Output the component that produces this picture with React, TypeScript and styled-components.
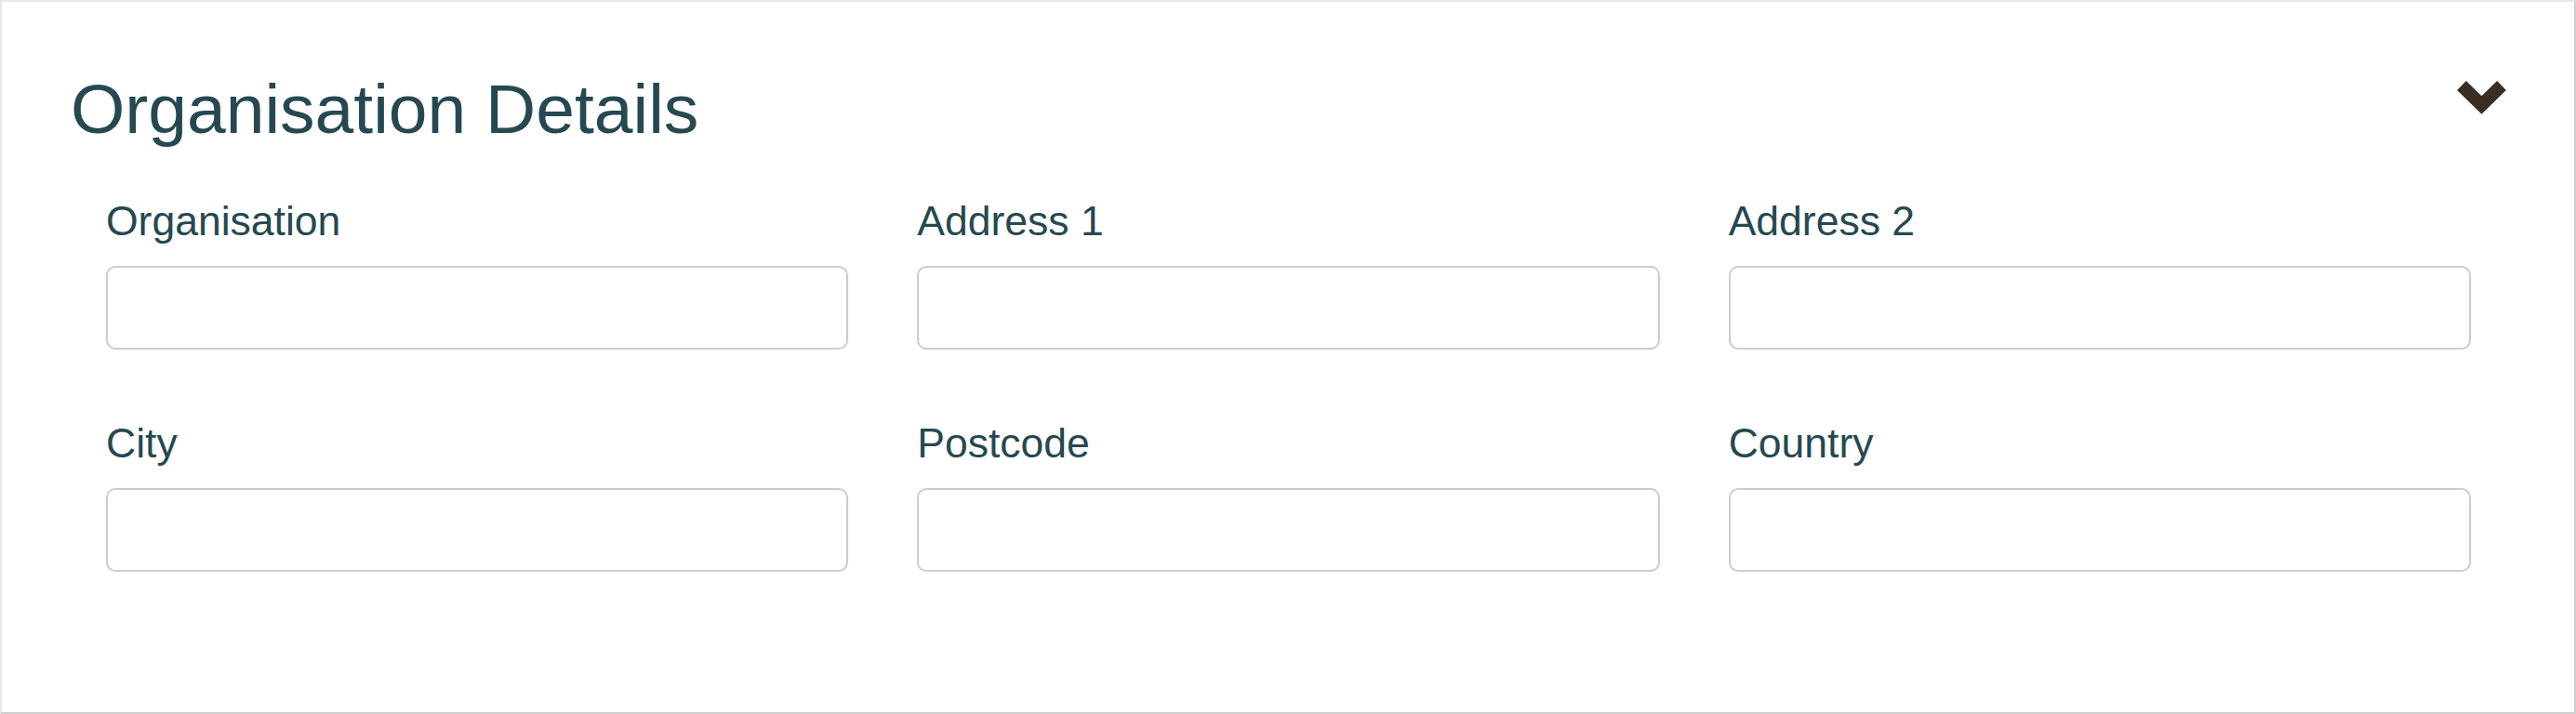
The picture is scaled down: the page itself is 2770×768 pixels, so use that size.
import React from "react";
import styled, { createGlobalStyle } from "styled-components";

const GlobalStyle = createGlobalStyle`
  html, body {
    margin: 0;
    padding: 0;
    background: #ffffff;
  }
  body {
    font-family: "Liberation Sans", Arial, Helvetica, sans-serif;
  }
  * { box-sizing: border-box; }
`;

const Card = styled.section`
  width: 2770px;
  height: 768px;
  background: #ffffff;
  border: 2px solid #e6e6e6;
  border-right-color: #cfcfcf;
  border-bottom-color: #cfcfcf;
  padding: 72px 73px 0 74px;
`;

const Header = styled.header`
  display: flex;
  justify-content: space-between;
  align-items: flex-start;
`;

const Title = styled.h2`
  margin: 0;
  font-family: "Liberation Sans", Arial, Helvetica, sans-serif;
  font-weight: 400;
  font-size: 75px;
  line-height: 86px;
  color: #264851;
`;

const ToggleButton = styled.button`
  margin-top: 13px;
  padding: 0;
  border: 0;
  background: transparent;
  display: flex;
  cursor: pointer;
`;

const Form = styled.div`
  margin-top: 53px;
  padding: 0 38px;
  display: grid;
  grid-template-columns: repeat(3, 1fr);
  column-gap: 74px;
  row-gap: 76px;
`;

const Field = styled.label`
  display: flex;
  flex-direction: column;
`;

const LabelText = styled.span`
  font-family: "Liberation Sans", Arial, Helvetica, sans-serif;
  font-size: 44.5px;
  line-height: 50px;
  color: #264851;
  margin-bottom: 23px;
`;

const Input = styled.input`
  width: 100%;
  height: 90px;
  border: 2px solid #cccccc;
  border-radius: 10px;
  background: #ffffff;
  font-family: "Liberation Sans", Arial, sans-serif;
  font-size: 36px;
  padding: 0 20px;
  outline: none;
`;

const Chevron = () => (
  <svg width="53" height="36" viewBox="0 0 53 36" aria-hidden="true">
    <polyline
      points="5,5 26.5,26 48,5"
      fill="none"
      stroke="#3a2e24"
      strokeWidth="14"
      strokeLinecap="butt"
      strokeLinejoin="miter"
    />
  </svg>
);

const fields = ["Organisation", "Address 1", "Address 2", "City", "Postcode", "Country"];

export default function App() {
  return (
    <>
      <GlobalStyle />
      <Card>
        <Header>
          <Title>Organisation Details</Title>
          <ToggleButton aria-label="Collapse">
            <Chevron />
          </ToggleButton>
        </Header>
        <Form>
          {fields.map((f) => (
            <Field key={f}>
              <LabelText>{f}</LabelText>
              <Input type="text" />
            </Field>
          ))}
        </Form>
      </Card>
    </>
  );
}
